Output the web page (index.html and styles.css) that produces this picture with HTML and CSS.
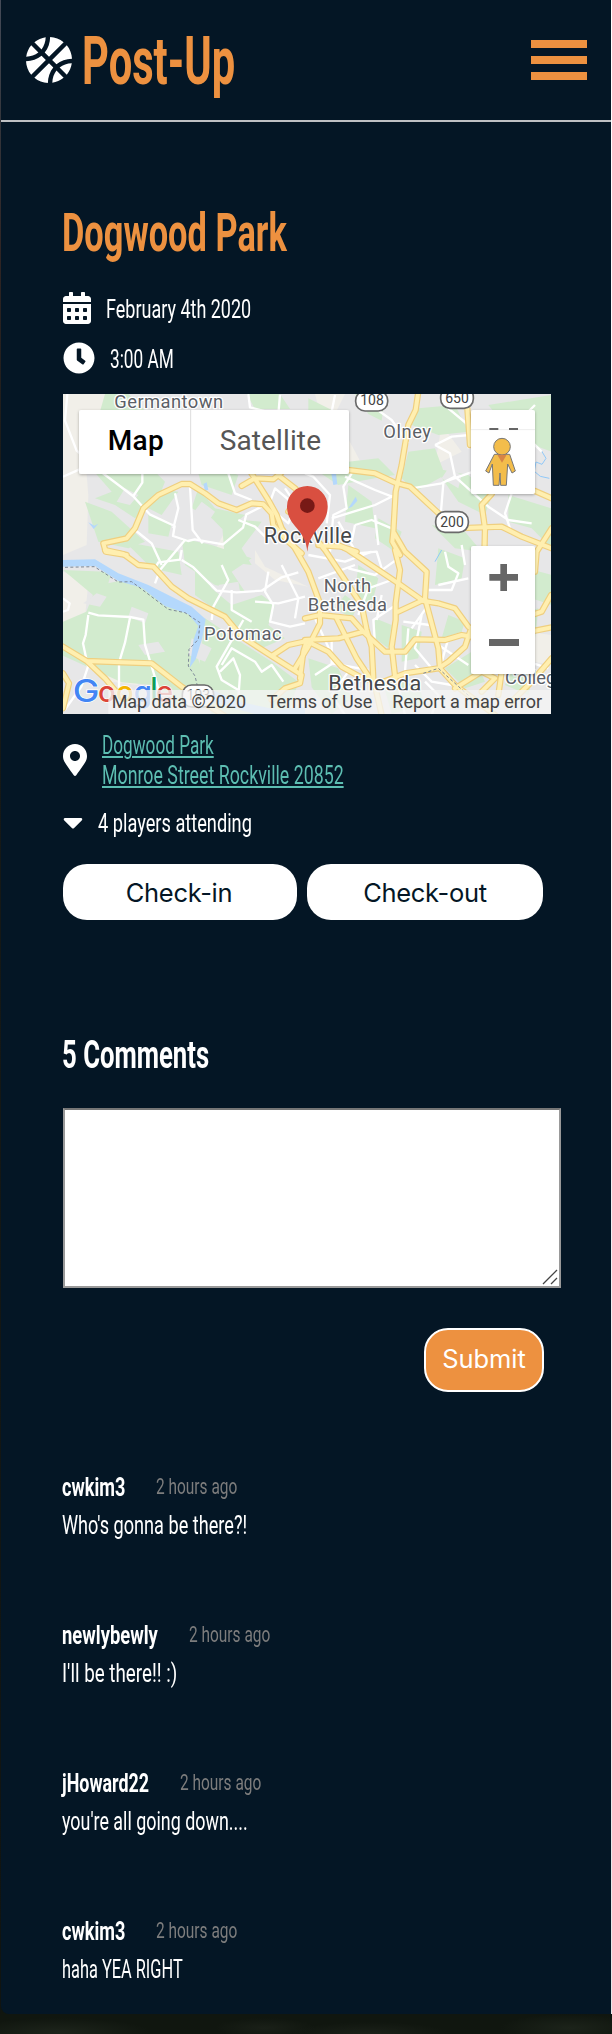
FILE: index.html
```html
<!DOCTYPE html>
<html lang="en">
<head>
<meta charset="utf-8">
<title>Post-Up</title>
<link rel="stylesheet" href="styles.css">
</head>
<body>
<div class="page">
<header class="header">
  <div class="brand">
    <svg class="ball" viewBox="0 0 496 512"><path d="M212.3 10.3c-43.8 6.3-86.2 24.1-122.2 53.8l77.4 77.4c27.8-35.8 43.3-81.2 44.8-131.2zM248 222L405.9 64.1c-42.4-35-93.6-53.5-145.5-56.1-1.2 63.9-21.5 122.3-58.7 167.7L248 222zM56.1 98.1c-29.7 36-47.5 78.4-53.8 122.2 50-1.5 95.5-17 131.2-44.8L56.1 98.1zm272.2 204.2c45.3-37.1 103.7-57.4 167.7-58.7-2.6-51.9-21.1-103.1-56.1-145.5L282 256l46.3 46.3zM248 290L90.1 447.9c42.4 34.9 93.6 53.5 145.5 56.1 1.3-64 21.6-122.4 58.7-167.7L248 290zm191.9 123.9c29.7-36 47.5-78.4 53.8-122.2-50.1 1.6-95.5 17.1-131.2 44.8l77.4 77.4zM167.7 209.7C122.3 246.9 63.9 267.3 0 268.4c2.6 51.9 21.1 103.1 56.1 145.5L214 256l-46.3-46.3zm116 292c43.8-6.3 86.2-24.1 122.2-53.8l-77.4-77.4c-27.7 35.7-43.2 81.2-44.8 131.2z"/></svg>
    <div class="logo fit" data-w="153"><span>Post-Up</span></div>
  </div>
  <div class="burger"><i></i><i></i><i></i></div>
</header>
<main class="main">
  <h1 class="title fit" data-w="225"><span>Dogwood Park</span></h1>
  <div class="row date">
    <svg width="28" height="32" viewBox="0 0 448 512"><path fill-rule="evenodd" d="M0 464c0 26.5 21.5 48 48 48h352c26.5 0 48-21.5 48-48V192H0v272zM448 112c0-26.5-21.5-48-48-48h-48V12c0-6.600-5.400-12-12-12h-40c-6.600 0-12 5.400-12 12v52H160V12c0-6.600-5.400-12-12-12h-40c-6.600 0-12 5.400-12 12v52H48C21.500 64 0 85.500 0 112v48h448z M76 256h40q12 0 12 12v40q0 12-12 12H76q-12 0-12-12v-40q0-12 12-12z M204 256h40q12 0 12 12v40q0 12-12 12h-40q-12 0-12-12v-40q0-12 12-12z M332 256h40q12 0 12 12v40q0 12-12 12h-40q-12 0-12-12v-40q0-12 12-12z M76 384h40q12 0 12 12v40q0 12-12 12H76q-12 0-12-12v-40q0-12 12-12z M204 384h40q12 0 12 12v40q0 12-12 12h-40q-12 0-12-12v-40q0-12 12-12z M332 384h40q12 0 12 12v40q0 12-12 12h-40q-12 0-12-12v-40q0-12 12-12z"/></svg>
    <div class="fit" data-w="145"><span>February 4th 2020</span></div>
  </div>
  <div class="row time">
    <svg width="32" height="32" viewBox="0 0 512 512"><path d="M256 8C119 8 8 119 8 256s111 248 248 248 248-111 248-248S393 8 256 8zm57.100 350.100L224.900 294c-3.100-2.300-4.900-5.900-4.900-9.700V116c0-6.600 5.400-12 12-12h48c6.600 0 12 5.400 12 12v137.700l63.500 46.200c5.400 3.900 6.500 11.400 2.600 16.800l-28.200 38.800c-3.900 5.300-11.400 6.500-16.800 2.600z"/></svg>
    <div class="fit" data-w="64"><span>3:00 AM</span></div>
  </div>

  <svg class="map" viewBox="24 27 1464 960">
    <defs>
      <filter id="shadow" x="-10%" y="-15%" width="120%" height="135%"><feDropShadow dx="0" dy="3" stdDeviation="5" flood-opacity=".3"/></filter>
      <g id="roads">
        <path d="M215 510L152 500 145 475 215 460 240 430 265 370 310 330 380 297 405 297 450 325 490 355 545 375 590 355 625 358 650 385 655 420 700 470 740 505"/>
        <path d="M150 495L205 507 250 540 295 545 350 605 400 640 510 695 560 755 650 813 740 870 735 895 690 910 650 945M650 813L700 780 755 768M735 880L745 800 755 768 820 800 860 845 915 875 960 890"/>
        <path d="M560 303L600 280 655 283 680 262M580 250L640 345 665 390 680 430 720 490 760 560 795 655 795 715 760 785 720 850M675 275L720 310 760 350M700 380L725 340"/>
        <path d="M790 470L810 495 870 585 920 660 935 735 950 785 955 880 980 990M790 480L860 485 905 500"/>
        <path d="M850 480L880 495 1030 595 1105 648 1150 655 1200 670 1240 725 1260 740"/>
        <path d="M1090 20L1082 75 1060 120 1040 240 1022 320 1015 440 1050 500 1115 560 1110 640 1150 790 1155 850 1200 900 1260 945 1320 990M1015 440L1012 470 1035 510"/>
        <path d="M880 255L960 265 1020 293 1065 305 1140 375 1200 430 1340 425 1400 455 1490 490"/>
        <path d="M1237 70L1245 180M1310 327L1280 360 1290 430 1288 510M1440 318L1490 340M1490 430L1445 500 1440 560"/>
        <path d="M750 765L850 760 925 740 990 800 1050 800 1080 763 1170 765 1220 750 1250 755 1440 737 1490 727M750 700L795 690 890 700 925 740"/>
        <path d="M1020 495L1035 555 1022 655 1022 705 1010 785 1022 890M1030 680L1105 645M960 900L1050 865 1150 850 1180 830 1230 785 1245 740"/>
        <path d="M24 785L95 828 200 832 290 835 380 905 450 955 520 1000M95 828L150 880 200 940M24 865L42 895 24 970M845 700L905 820 945 880M1200 910L1280 860 1320 880 1280 920M1490 820L1430 890 1370 950M1488 630L1460 680 1430 690M1340 860L1330 930"/>
      </g>
    </defs>
    <path fill="#e7e7e8" d="M24 27h1464v960H24z"/>
    <path fill="#f1efe9" d="M24 27H190L130 110 90 210 100 330 95 480 24 510zM24 560L100 590 90 700 24 720zM90 770L190 830 250 900 170 890zM780 27h90l-30 60 80 150 90 50-90-20-90-50zM1160 120l60 80-80 40zM600 495l30 50 130 60-100-20-60-50zM1420 740l68 10v90l-50-10zM520 420l40 30-30 45-60 20z"/>
    <g fill="#d2ebce">
      <path d="M150 27h70l50 50-40 40-100-20zM100 240l160-20 70 70-20 50-70 60-60-40-60-20 50-20zM90 350l80 30 100 90-50 20-90-20zM290 310l80 10-50 70-40-20zM280 385l70 30-10 40-60-10zM420 230l130 40-20 60-90-30zM430 310l50 60 90 20-60 50-40-40-60-30zM500 400l120 10-60 80 30 50-80-10zM380 460l90 20 120 40-60 40 40 60-90-20-90-60zM210 470l160 30 10 70-90-20z"/>
      <path d="M24 555l130 5 90 40 130 60 75 60-20 100 40 140H370l-80-60-90-8-176-80V710l70-30 20-50zM450 700l90 60 110 70 80 60-30 97H470l-40-120zM420 520l50 90 60 50 90-30 40 30-20 60 50 40-70 30-90-80-110-80z"/>
      <path d="M575 27h100l30 45H600zM760 40l100 50 20 140 90-10 50 50-60 10-110 20-90-60zM880 300l70 50 10 80-90-20zM900 27h90l-10 80-40-20zM1090 70l110-10 40 80-90 10-80-30zM1060 200l80-10 30 80-90 50-40-40zM1140 250l100 20 70 60-20 60-80-40zM1300 60l190-30v170l-110-40zM1360 330l130 40v120l-60-60-70-20zM1130 420l100 20 50 60-80-10zM970 400l70 40-20 60-60-40zM1150 490l80 30-10 60-80 20zM1380 540l110 30v90l-90-30zM1280 630l110 60 60-20-10 90-100-30zM910 540l60 40-20 80-50-30z"/>
      <path d="M760 820l90 30 40 90-60 47-60-80zM960 700l50 20-10 70-40-30zM1040 720l60 20-10 80-50 10zM1180 690l50 20-10 30-60 20zM1170 850l80-50 40 90-60 20zM980 880l110 20 20 60-100 27zM1380 830l60 20-20 80-70-30zM870 630l40 30-20 40-50-30z"/>
    </g>
    <g fill="#e7e7e8"><path d="M170 560l60-15 20 30-90 20zM85 655l40-30 30 10-20 30zM230 665l50 20-10 30-50-20zM250 780l60-10 20 30-60 10zM410 760l60 30-20 40-50-20zM440 350l40 30-20 30-50-20zM210 310l40 20-25 30-40-10zM490 600l60-10 10 60-50-20zM790 140l40-20 30 50-50 30zM1180 250l40 20-10 40-50-30zM1370 100l50 20-20 50-40-30z"/></g>
    <path fill="#b4d8fc" d="M24 525l96-2 70 42 90 35 70 35 60 30 42 38-10 55-20 65-18 25 12-85 14-40-30-35-70-25-70-55-70-20-70-45-96 2zM440 900l110 50 120 25 80-10v22H600l-130-35zM445 297l10-5 5 22-10 4zM100 412l18 10 12-6-14 16zM828 260l14-2 5 40-12 2zM880 370l22-35 5 12-16 18z"/>
    <path fill="none" stroke="#91c9f9" stroke-width="3" d="M1458 195l15 25-12 18-18-7-5 28 18 15 27 6M1160 495l-20 35"/>
    <g fill="none" stroke="#fff" stroke-width="7" stroke-linejoin="round">
      <path d="M37 27l-7 80 35 90 30 25M24 275l50-22 65 8 95 72 50 55 75 35-5 30 45 15 20-5 85 15 60-50 10-40 50-25M235 333l27-40v-30M360 325l10 45-15 60M405 305l8 130 30 40M580 27l5 40 85 22 5-60M390 465l-75 90-15 40M240 435l50 40 30 65M500 540l20 45-45 80-5 40"/>
      <path d="M300 550l10-18 65-8 5-29M380 525l35 22 70 70 60 5 75-5 60-40 50-15M530 615v60l60 35M100 683l30 8 95 5 40 8 5 75 20 65 30 100M100 690l-8 60-8 25 15 70-20 60-50 70M225 698l-15 75-18 60v75M500 840l30-50 70 40 20 30 30-20 35 50M495 860l40-40 20 50-5 70M565 705l-80 140 15 40 50 30M640 560l-10 60 25 40-10 50 60 15 45-10M680 540l50 100-10 60M1130 990l20-60-40-40M600 650l70 5 80-20M24 640l20 15-5 20-15 5"/>
      <path d="M840 30l-20 100 60 60M750 265l25 10 50 55-10 85M890 265l-25 40 10 65-40 20-10 110M870 275l90 40 65 25M830 400l130-40 60-30M1140 180l45 25 15 70-40 20-90 15M1140 180l50-25 55-5M1200 275l100 90 60 40 70 10M1165 295l-10 120M940 55l70 50 50 70M1170 290l70-25 60-20M850 410l55 95 60-5 15 50M900 420l50-15 60 25M960 390l10 90M900 420l-10 50M1250 100l-10 90M1380 120l60-60M1400 140l60 60M1240 120l-60-50M1370 325l-20 60 20 60"/>
      <path d="M520 265l20 60 50 20M660 310l60 50-20 55-60-50zM550 405l50 20 30 30M690 310l55 80M760 510l110 20 80-30M880 550l80 20 70-50M790 580l110-40M1120 615h70l20-50-30-20-10-45M1010 585l-70 25-30 80M980 630l-15 75M1045 710l80 10 25 50M960 775l-5-70 60-40M780 700l60 130-60 40M830 755v80l110 20M1060 730l-10 130M1100 690l-20 100 50 60M1150 780l90 60M1080 840l50 50 60 10M1120 660l-50 70M880 860l-50 70 40 60M1030 900l20 90M1180 760l-25 90M1220 480l10 60M1240 580l-90 20M1370 750l50 80 60 20"/>
    </g>
    <use href="#roads" fill="none" stroke="#efcf7f" stroke-width="19" stroke-linejoin="round" stroke-linecap="round"/>
    <use href="#roads" fill="none" stroke="#ffefb0" stroke-width="12" stroke-linejoin="round" stroke-linecap="round"/>
    <path fill="none" stroke="#7d8897" stroke-width="3" stroke-dasharray="9 7" d="M30 547l88-2 72 46 40-1 110 83 50 10 45 30-5 50-28 30-2 50 20 30 12 50M1105 865l45-15 100 90"/>
    <g class="places">
      <text x="178" y="69" textLength="326">Germantown</text>
      <text x="985" y="160" textLength="143">Olney</text>
      <text x="626" y="473" textLength="264" class="city">Rockville</text>
      <text x="806" y="620" textLength="142">North</text>
      <text x="758" y="678" textLength="238">Bethesda</text>
      <text x="447" y="766" textLength="233">Potomac</text>
      <text x="820" y="917" textLength="279" class="city">Bethesda</text>
      <text x="1350" y="896">College</text>
    </g>
    <g fill="#fff" stroke="#6a6a6a" stroke-width="5"><rect x="902" y="18" width="96" height="60" rx="28"/><rect x="1157" y="8" width="98" height="62" rx="28"/><rect x="1142" y="380" width="98" height="62" rx="28"/><rect x="382" y="900" width="94" height="66" rx="28"/></g>
    <g class="shield"><text x="951" y="61">108</text><text x="1206" y="54">650</text><text x="1191" y="427">200</text><text x="430" y="945">193</text></g>
    <path fill="#d94f40" d="M757 500C752 430 696 425 696 364a61 61 0 0 1 122 0C818 425 765 430 757 500z"/><circle cx="757" cy="362" r="22" fill="#771916"/>
    <g class="google"><text x="53" y="950" fill="#4285f4" class="cap" textLength="80" lengthAdjust="spacingAndGlyphs">G</text><text x="129" y="950" fill="#db4437">o</text><text x="183" y="950" fill="#f4b400">o</text><text x="236" y="950" fill="#4285f4">g</text><text x="286" y="943" fill="#0f9d58">l</text><text x="303" y="950" fill="#db4437">e</text></g>
    <path fill="#f5f5f5" fill-opacity=".78" d="M160 915h1328v72H160z"/>
    <g class="terms"><text x="170" y="969" textLength="403">Map data ©2020</text><text x="635" y="969" textLength="317">Terms of Use</text><text x="1012" y="969" textLength="449">Report a map error</text></g>
    <g filter="url(#shadow)"><rect x="72" y="75" width="810" height="192" rx="6" fill="#fff"/></g>
    <path stroke="#ddd" stroke-width="3" d="M407 75v192"/>
    <text class="type active" x="158" y="194" textLength="168">Map</text><text class="type" x="494" y="194" textLength="304">Satellite</text>
    <g filter="url(#shadow)" fill="#fff"><rect x="1248" y="75" width="192" height="252" rx="6"/><rect x="1248" y="483" width="192" height="384" rx="6"/></g>
    <path fill="none" stroke="#eee" stroke-width="3" d="M1248 134h192"/>
    <path fill="#666" d="M1303 129h27v6h-27zM1362 129h27v6h-27zM1303 567h33v-30h20v30h33v20h-33v31h-20v-31h-33zM1302 762h90v21h-90z"/>
    <g fill="#f3bd4b" stroke="#777" stroke-width="3"><path d="M1318 208h46l17 50-10 6-13-27-4 64h-17l-2-37-3 37h-17l-3-64-10 27-10-6z"/><circle cx="1341" cy="185" r="25"/></g><path fill="#d78446" d="M1327 209h28l-14 24z"/>
  </svg>

  <div class="row place">
    <svg width="24" height="32" viewBox="0 0 384 512"><path d="M172.268 501.670C26.970 291.031 0 269.413 0 192 0 85.961 85.961 0 192 0s192 85.961 192 192c0 77.413-26.970 99.031-172.268 309.670-9.535 13.774-29.930 13.773-39.464 0zM192 272c44.183 0 80-35.817 80-80s-35.817-80-80-80-80 35.817-80 80 35.817 80 80 80z"/></svg>
    <div class="address">
      <a class="fit" data-w="112"><span>Dogwood Park</span></a>
      <a class="fit" data-w="242"><span>Monroe Street Rockville 20852</span></a>
    </div>
  </div>
  <div class="row players">
    <svg width="20" height="32" viewBox="0 0 320 512"><path d="M31.300 192h257.300c17.800 0 26.700 21.500 14.100 34.100L174.100 354.800c-7.800 7.800-20.500 7.800-28.300 0L17.200 226.100C4.600 213.500 13.500 192 31.300 192z"/></svg>
    <div class="fit" data-w="154"><span>4 players attending</span></div>
  </div>
  <div class="actions"><button class="in">Check-in</button><button class="out">Check-out</button></div>

  <h2 class="count fit" data-w="147"><span>5 Comments</span></h2>
  <div class="textarea"><svg width="16" height="16" viewBox="0 0 16 16"><path d="M1 15L15 1M9 15l6-6" stroke="#444" stroke-width="1.300"/></svg></div>
  <div class="submit-row"><button class="submit">Submit</button></div>

  <section class="comments">
    <article><div class="meta"><b class="fit" data-w="63"><span>cwkim3</span></b><time class="fit" data-w="81"><span>2 hours ago</span></time></div><p class="fit" data-w="185"><span>Who's gonna be there?!</span></p></article>
    <article><div class="meta"><b class="fit" data-w="96"><span>newlybewly</span></b><time class="fit" data-w="81"><span>2 hours ago</span></time></div><p class="fit" data-w="115"><span>I'll be there!! :)</span></p></article>
    <article><div class="meta"><b class="fit" data-w="87"><span>jHoward22</span></b><time class="fit" data-w="81"><span>2 hours ago</span></time></div><p class="fit" data-w="186"><span>you're all going down....</span></p></article>
    <article><div class="meta"><b class="fit" data-w="63"><span>cwkim3</span></b><time class="fit" data-w="81"><span>2 hours ago</span></time></div><p class="fit" data-w="121"><span>haha YEA RIGHT</span></p></article>
  </section>
</main>
</div>
<script src="fit.js"></script>
</body>
</html>
```
FILE: styles.css
```css
* { box-sizing: border-box; }
html, body { margin: 0; }
body {
  height: 2034px;
  overflow: hidden;
  padding: 0 1px;
  font: 25.3px Roboto, sans-serif;
  color: #fff;
  background:
    linear-gradient(#fff, #e4e7e8) 611px 0 / 1px 2014px no-repeat,
    linear-gradient(#454b58 0, #34363c 120px, #302524 250px, #171a18 500px, #101411 100%) 0 0 / 1px 2014px no-repeat,
    radial-gradient(ellipse 90px 14px at 60px 2032px, #1d241b, transparent),
    radial-gradient(ellipse 50px 10px at 265px 2028px, #1a2018, transparent),
    radial-gradient(ellipse 80px 12px at 370px 2034px, #1b2119, transparent),
    radial-gradient(ellipse 70px 14px at 570px 2028px, #1c231a, transparent),
    #10160f;
}
.page { height: 2014px; background: #041625; border-bottom-left-radius: 8px; }
.header {
  display: flex;
  justify-content: space-between;
  height: 122px;
  padding: 0 24px 0 25px;
  border-bottom: 2px solid #bfc1c4;
}
.brand { display: flex; align-items: center; gap: 10px; }
.ball { width: 46px; height: 48px; fill: #fff; }
.logo { font-size: 66px; font-weight: 700; color: #ed9140; line-height: 76px; padding-top: 4px; }
.burger { display: flex; flex-direction: column; gap: 8px; padding-top: 40px; }
.burger i { width: 56px; height: 8px; background: #ed9140; }

.fit { display: block; white-space: nowrap; }
.fit span { display: inline-block; transform-origin: 0 50%; }

.main { padding: 79px 50px 0 62px; }
.title { margin: 0 0 27px -1px; font-size: 53.5px; line-height: 64px; font-weight: 700; color: #ed9140; }
.row { display: flex; align-items: center; height: 32px; line-height: 32px; }
.row svg { fill: #fff; flex: none; }
.row .fit { padding-top: 3px; }
.date { gap: 15px; margin-bottom: 18px; }
.time { gap: 15px; margin-bottom: 20px; }
.map { display: block; width: 488px; height: 320px; font-family: Roboto, sans-serif; }
.places { font-size: 55px; fill: #5b6066; stroke: #fff; stroke-width: 8px; paint-order: stroke; stroke-linejoin: round; }
.places .city { font-size: 65px; fill: #45484b; }
.shield { font-size: 42px; text-anchor: middle; fill: #444; }
.google { font: 500 88px Inter, sans-serif; stroke: #fff; stroke-width: 4px; paint-order: stroke; }
.google .cap { font-size: 92px; }
.terms { font-size: 54px; fill: #444; }
.type { font-size: 84px; fill: #565656; }
.type.active { font-weight: 500; fill: #000; }
.place { height: 60px; margin-top: 16px; gap: 15px; }
.address { line-height: 30px; color: #5dbeb2; }
.address .fit { padding: 0; height: 30px; position: relative; top: 1px; }
.address span { text-decoration: underline; text-decoration-thickness: 2px; text-underline-offset: 2px; text-decoration-skip-ink: auto; }
.players { margin-top: 16px; gap: 15px; }
.actions { display: flex; gap: 10px; margin-top: 26px; }
.actions button { height: 56px; padding: 0; border: 0; border-radius: 24px; background: #fff; color: #041625; font: 25.5px Inter, sans-serif; letter-spacing: -.3px; }
.actions .in { width: 234px; padding-right: 2px; }
.actions .out { width: 236px; }
.count { margin: 111px 0 29px -1px; font-size: 39.5px; line-height: 48px; font-weight: 700; }
.textarea { display: flex; justify-content: flex-end; align-items: flex-end; width: 498px; height: 180px; padding: 1px; background: #fff; border: 2px solid #999; border-top-color: #767676; }
.submit-row { display: flex; justify-content: flex-end; margin-top: 40px; padding-right: 17px; }
.submit { width: 120px; height: 64px; padding: 0 0 3px; border: 2px solid #fff; border-radius: 24px; background: #ed9140; color: #fff; font: 25.5px Inter, sans-serif; letter-spacing: -.1px; }
.comments { margin: 77px 0 0 -1px; }
.comments article { height: 148px; }
.meta { display: flex; gap: 31px; line-height: 38px; height: 38px; }
.meta b { font-weight: 700; }
.meta time { font-size: 22.5px; line-height: 35px; color: #7d7d7d; }
.comments p { margin: 0; line-height: 38px; }
```
FILE: fit.js
```js
// Condense each label horizontally to its column width.
document.querySelectorAll('.fit').forEach(function (box) {
  var label = box.firstElementChild;
  var width = Number(box.dataset.w);
  var natural = label.offsetWidth;
  box.style.width = width + 'px';
  label.style.transform = 'scaleX(' + width / natural + ')';
});
```
